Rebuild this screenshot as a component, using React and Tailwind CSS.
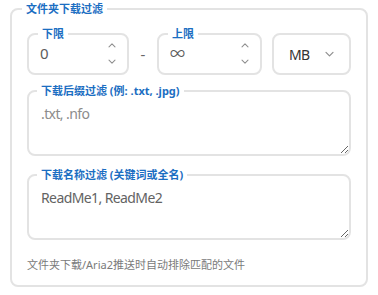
import { useState } from 'react'

const Chevron = ({ up, className }) => (
  <svg viewBox="0 0 12 8" className={className} fill="none" stroke="currentColor" strokeWidth="1.4" strokeLinecap="round" strokeLinejoin="round">
    {up ? <path d="M2 6.5 6 2.5l4 4" /> : <path d="M2 1.5 6 5.5l4-4" />}
  </svg>
)

const NumberBox = ({ label, value, width }) => (
  <fieldset className={`${width} border-2 border-[#e3e3e3] rounded-[8px]`}>
    <legend className="ml-[9px] px-[4px] text-[11px] leading-[12px] font-bold text-[#1b6ec2]">{label}</legend>
    <div className="flex items-center h-[33px] pb-[6px] pl-[11px] pr-[10px]">
      <span className="flex-1 text-[15px] tracking-[-0.4px] text-[#5c5c5c]">{value}</span>
      <div className="flex flex-col items-center gap-[11px] text-[#8f8f8f]">
        <Chevron up className="w-[10px] h-[6px]" />
        <Chevron className="w-[10px] h-[6px]" />
      </div>
    </div>
  </fieldset>
)

const AreaBox = ({ label, value, placeholder, className }) => {
  const [text, setText] = useState(value || '')
  return (
    <fieldset className={`border-2 border-[#e3e3e3] rounded-[8px] ${className}`}>
      <legend className="ml-[8px] px-[4px] text-[11px] leading-[12px] font-bold text-[#1b6ec2]">{label}</legend>
      <textarea
        value={text}
        onChange={e => setText(e.target.value)}
        placeholder={placeholder}
        className="block w-full h-[57px] px-[12px] pt-[7px] text-[14px] tracking-[-0.6px] leading-[20px] text-[#636363] placeholder:text-[#8c8c8c] outline-none bg-transparent"
      />
    </fieldset>
  )
}

const App = () => {
  return (
    <div className="w-[378px] h-[295px] bg-white pt-[1px]" style={{ fontFamily: '"Noto Sans", "Noto Sans CJK SC", sans-serif' }}>
      <fieldset className="mx-[10px] border-2 border-[#e3e3e3] rounded-[8px] px-[15px] pt-[11px] pb-[13px]">
        <legend className="-ml-[5px] px-[4px] text-[11px] leading-[16px] font-bold text-[#1b6ec2]">文件夹下载过滤</legend>

        <div className="flex items-end">
          <NumberBox label="下限" value="0" width="w-[102px]" />
          <div className="w-[28px] h-[42px] flex items-center justify-center text-[15px] text-[#666]">-</div>
          <NumberBox label="上限" value="∞" width="w-[105px]" />
          <div className="ml-[10px] w-[79px] h-[42px] border-2 border-[#e3e3e3] rounded-[8px] flex items-center pl-[15px] pr-[14px]">
            <span className="flex-1 text-[14px] tracking-[-0.6px] text-[#333]">MB</span>
            <Chevron className="w-[11px] h-[7px] text-[#8f8f8f]" />
          </div>
        </div>

        <AreaBox className="mt-[10px]" label="下载后缀过滤 (例: .txt, .jpg)" placeholder=".txt, .nfo" />
        <AreaBox className="mt-[13px]" label="下载名称过滤 (关键词或全名)" value="ReadMe1, ReadMe2" />

        <p className="mt-[18px] text-[11px] leading-[14px] text-[#7a7a7a]">文件夹下载/Aria2推送时自动排除匹配的文件</p>
      </fieldset>
    </div>
  )
}

export default App
